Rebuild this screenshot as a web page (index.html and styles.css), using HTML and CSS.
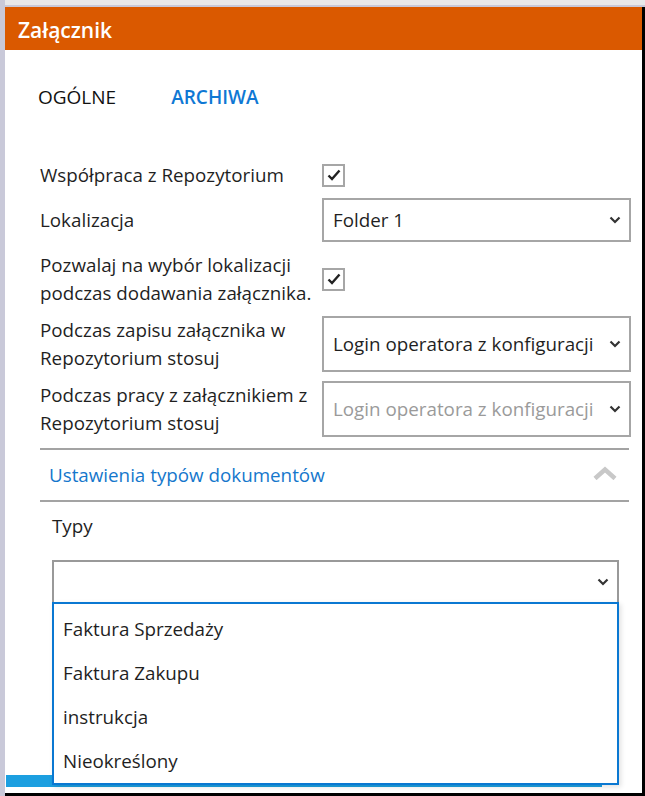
FILE: index.html
```html
<!DOCTYPE html>
<html lang="pl">
<head>
<meta charset="utf-8">
<title>Załącznik</title>
<link rel="stylesheet" href="styles.css">
</head>
<body>
<div class="window">
  <div class="topbar"></div>
  <div class="panel">
    <div class="header">Załącznik</div>
    <div class="tabs">
      <span class="tab">OGÓLNE</span>
      <span class="tab active">ARCHIWA</span>
    </div>
    <div class="form">
      <div class="label">Współpraca z Repozytorium</div>
      <div class="control">
        <span class="checkbox"><svg width="18" height="18" viewBox="0 0 18 18"><polyline points="3.5,9.5 7,13 14.5,4.5" fill="none" stroke="#222" stroke-width="2.4"/></svg></span>
      </div>

      <div class="label">Lokalizacja</div>
      <div class="control">
        <div class="select"><span>Folder 1</span><svg class="chev" width="12" height="8" viewBox="0 0 12 8"><polyline points="1.5,1.5 6,6 10.5,1.5" fill="none" stroke="#333" stroke-width="2.2"/></svg></div>
      </div>

      <div class="label">Pozwalaj na wybór lokalizacji<br>podczas dodawania załącznika.</div>
      <div class="control">
        <span class="checkbox"><svg width="18" height="18" viewBox="0 0 18 18"><polyline points="3.5,9.5 7,13 14.5,4.5" fill="none" stroke="#222" stroke-width="2.4"/></svg></span>
      </div>

      <div class="label">Podczas zapisu załącznika w<br>Repozytorium stosuj</div>
      <div class="control">
        <div class="select"><span>Login operatora z konfiguracji</span><svg class="chev" width="12" height="8" viewBox="0 0 12 8"><polyline points="1.5,1.5 6,6 10.5,1.5" fill="none" stroke="#333" stroke-width="2.2"/></svg></div>
      </div>

      <div class="label">Podczas pracy z załącznikiem z<br>Repozytorium stosuj</div>
      <div class="control">
        <div class="select disabled"><span>Login operatora z konfiguracji</span><svg class="chev" width="12" height="8" viewBox="0 0 12 8"><polyline points="1.5,1.5 6,6 10.5,1.5" fill="none" stroke="#333" stroke-width="2.2"/></svg></div>
      </div>
    </div>

    <div class="section">
      <div class="section-head">
        <span>Ustawienia typów dokumentów</span>
        <svg width="24" height="14" viewBox="0 0 24 14"><polyline points="2,12.5 12,3.5 22,12.5" fill="none" stroke="#c8c8c8" stroke-width="4.5"/></svg>
      </div>
      <div class="section-body">
        <div class="field-label">Typy</div>
        <div class="multi">
          <div class="select wide"><span></span><svg class="chev" width="12" height="8" viewBox="0 0 12 8"><polyline points="1.5,1.5 6,6 10.5,1.5" fill="none" stroke="#333" stroke-width="2.2"/></svg></div>
          <ul class="dropdown">
            <li>Faktura Sprzedaży</li>
            <li>Faktura Zakupu</li>
            <li>instrukcja</li>
            <li>Nieokreślony</li>
          </ul>
        </div>
      </div>
    </div>

    <div class="bottom-bar"></div>
  </div>
</div>
</body>
</html>
```

FILE: styles.css
```css
* { box-sizing: border-box; }
html, body {
  margin: 0;
  padding: 0;
  background: #ffffff;
}
body {
  width: 645px;
  height: 796px;
  overflow: hidden;
  font-family: "Open Sans", "Noto Sans", sans-serif;
  color: #1f1f1f;
}
.window {
  height: 796px;
  display: flex;
  flex-direction: column;
  border-left: 5px solid #c9c9d9;
}
.topbar {
  height: 7px;
  flex: 0 0 7px;
  background: #e8e8ea;
  border-bottom: 2px solid #c9c9d9;
}
.panel {
  flex: 1;
  position: relative;
  display: flex;
  flex-direction: column;
  border-right: 3px solid #000;
  border-bottom: 3px solid #000;
  background: #fff;
}
.header {
  height: 43px;
  flex: 0 0 43px;
  background: #da5900;
  color: #fff;
  font-size: 21px;
  font-weight: 600;
  padding: 5px 0 0 13px;
  line-height: 36px;
}
.tabs {
  display: flex;
  gap: 55px;
  padding: 33px 0 0 33px;
  height: 111px;
  flex: 0 0 auto;
}
.tab {
  font-size: 19px;
  line-height: 28px;
  color: #111;
}
.tab.active {
  color: #0f78d4;
  font-weight: 600;
}
.form {
  display: grid;
  grid-template-columns: 282px 1fr;
  grid-template-rows: 28px 44px 56px 56px 56px;
  row-gap: 9px;
  padding: 0 11px 0 35px;
}
.form .label {
  font-size: 18.8px;
  line-height: 28px;
  display: flex;
  align-items: center;
  color: #1f1f1f;
}
.form .control {
  display: flex;
  align-items: center;
}
.checkbox {
  width: 23px;
  height: 23px;
  border: 2px solid #a6a6a6;
  display: flex;
  align-items: center;
  justify-content: center;
  background: #fff;
}
.select {
  flex: 1;
  align-self: stretch;
  border: 2px solid #a6a6a6;
  display: flex;
  align-items: center;
  justify-content: space-between;
  padding: 0 8px 0 9px;
  font-size: 18.8px;
  color: #1f1f1f;
  background: #fff;
}
.select span {
  white-space: nowrap;
}
.select.disabled { color: #9a9a9a; }
.chev { flex: 0 0 auto; }
.section {
  margin: 11px 13px 0 35px;
  border-top: 2px solid #a3a3a3;
}
.section-head {
  height: 52px;
  border-bottom: 2px solid #a3a3a3;
  display: flex;
  align-items: center;
  justify-content: space-between;
  padding: 0 12px 0 9px;
  font-size: 18.8px;
  color: #1577cc;
}
.section-head svg { margin-top: -4px; }
.section-body {
  padding: 10px 10px 0 12px;
}
.field-label {
  font-size: 18.8px;
  line-height: 28px;
  color: #1f1f1f;
}
.multi {
  position: relative;
  margin-top: 20px;
}
.select.wide {
  height: 44px;
  border-color: #999;
}
.dropdown {
  position: absolute;
  left: 0;
  right: 0;
  top: 42px;
  margin: 0;
  padding: 3px 0 0 0;
  list-style: none;
  border: 2px solid #0a78d2;
  background: #fff;
  box-shadow: 2px 2px 5px rgba(0, 0, 0, 0.12);
  z-index: 2;
}
.dropdown li {
  height: 44px;
  line-height: 44px;
  padding-left: 9px;
  font-size: 18.8px;
  color: #1f1f1f;
}
.bottom-bar {
  height: 12px;
  flex: 0 0 12px;
  margin: auto 40px 6px 1px;
  background: #1c9fe0;
}
```
